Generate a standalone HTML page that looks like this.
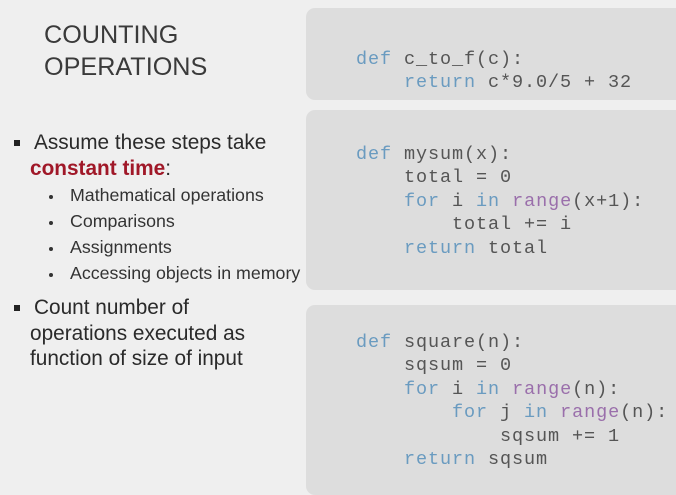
<!DOCTYPE html>
<html><head><style>
body{margin:0;width:676px;height:479px;background:#efefef;position:relative;overflow:hidden;font-family:"Liberation Sans",sans-serif;color:#2b2b2b}
.box{position:absolute;left:306px;width:380px;background:#dddddd;border-radius:9px}
pre{position:absolute;left:356px;margin:0;font-family:"Liberation Mono",monospace;font-size:18.5px;letter-spacing:0.9px;line-height:23.4px;color:#555}
.k{color:#6a9bc0}.r{color:#9a6fab}
.t{position:absolute;left:44px;font-size:25.2px;line-height:32px;color:#3a3a3a}
.b{position:absolute;font-size:20.8px;line-height:24px;color:#2a2a2a}
.sq{position:absolute;width:6px;height:6px;background:#222}
.s{position:absolute;left:70px;font-size:17.8px;color:#333}
.d{position:absolute;left:49px;width:4px;height:4px;border-radius:50%;background:#333}
</style></head><body>
<div class="box" style="top:8px;height:92px"></div>
<div class="box" style="top:110px;height:180px"></div>
<div class="box" style="top:305px;height:190px"></div>
<pre style="top:48px"><span class="k">def</span> c_to_f(c):
    <span class="k">return</span> c*9.0/5 + 32</pre>
<pre style="top:143px"><span class="k">def</span> mysum(x):
    total = 0
    <span class="k">for</span> i <span class="k">in</span> <span class="r">range</span>(x+1):
        total += i
    <span class="k">return</span> total</pre>
<pre style="top:331px"><span class="k">def</span> square(n):
    sqsum = 0
    <span class="k">for</span> i <span class="k">in</span> <span class="r">range</span>(n):
        <span class="k">for</span> j <span class="k">in</span> <span class="r">range</span>(n):
            sqsum += 1
    <span class="k">return</span> sqsum</pre>
<div class="t" style="top:19px">COUNTING<br>OPERATIONS</div>
<div class="sq" style="left:14px;top:140px"></div>
<div class="b" style="left:34px;top:131px">Assume these steps take</div>
<div class="b" style="left:30px;top:157px"><b style="color:#a01828">constant time</b>:</div>
<div class="d" style="top:195px"></div><div class="s" style="top:185px">Mathematical operations</div>
<div class="d" style="top:221px"></div><div class="s" style="top:211px">Comparisons</div>
<div class="d" style="top:247px"></div><div class="s" style="top:237px">Assignments</div>
<div class="d" style="top:273px"></div><div class="s" style="top:263px">Accessing objects in memory</div>
<div class="sq" style="left:14px;top:305px"></div>
<div class="b" style="left:34px;top:296px">Count number of</div>
<div class="b" style="left:30px;top:322px">operations executed as</div>
<div class="b" style="left:30px;top:347px">function of size of input</div>
</body></html>
